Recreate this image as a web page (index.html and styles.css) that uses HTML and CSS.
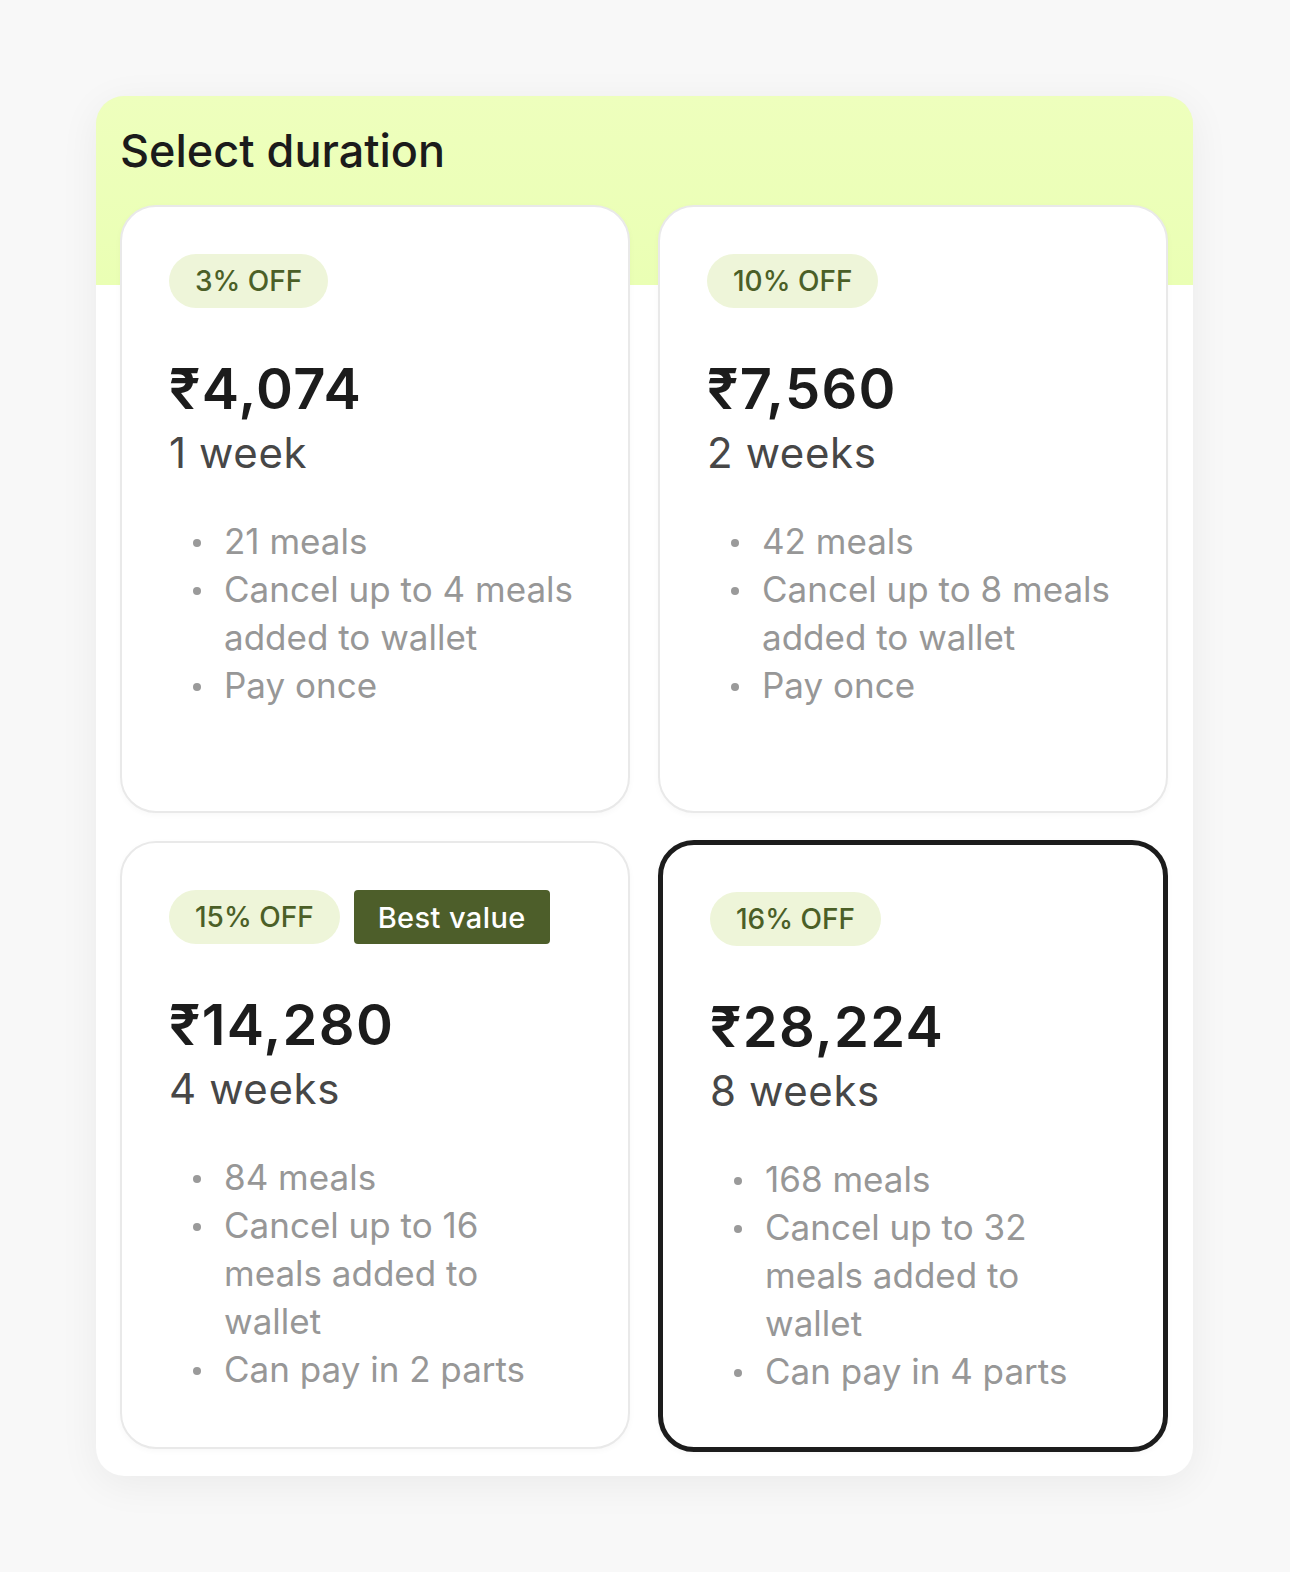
FILE: index.html
```html
<!DOCTYPE html>
<html lang="en">
<head>
    <meta charset="UTF-8">
    <meta name="viewport" content="width=device-width, initial-scale=1.0">
    <title>Select duration</title>
    <link rel="stylesheet" href="styles.css">
</head>
<body>
    <div class="plan-panel">
        <h2 class="panel-title">Select duration</h2>

        <div class="plan-grid">
            <div class="plan-card">
                <div class="tags">
                    <span class="off-tag">3% OFF</span>
                </div>
                <div class="price">₹4,074</div>
                <div class="duration">1 week</div>
                <ul class="perks">
                    <li>21 meals</li>
                    <li>Cancel up to 4 meals added to wallet</li>
                    <li>Pay once</li>
                </ul>
            </div>

            <div class="plan-card">
                <div class="tags">
                    <span class="off-tag">10% OFF</span>
                </div>
                <div class="price">₹7,560</div>
                <div class="duration">2 weeks</div>
                <ul class="perks">
                    <li>42 meals</li>
                    <li>Cancel up to 8 meals added to wallet</li>
                    <li>Pay once</li>
                </ul>
            </div>

            <div class="plan-card">
                <div class="tags">
                    <span class="off-tag">15% OFF</span>
                    <span class="best-tag">Best value</span>
                </div>
                <div class="price">₹14,280</div>
                <div class="duration">4 weeks</div>
                <ul class="perks">
                    <li>84 meals</li>
                    <li>Cancel up to 16 meals added to wallet</li>
                    <li>Can pay in 2 parts</li>
                </ul>
            </div>

            <div class="plan-card selected">
                <div class="tags">
                    <span class="off-tag">16% OFF</span>
                </div>
                <div class="price">₹28,224</div>
                <div class="duration">8 weeks</div>
                <ul class="perks">
                    <li>168 meals</li>
                    <li>Cancel up to 32 meals added to wallet</li>
                    <li>Can pay in 4 parts</li>
                </ul>
            </div>
        </div>
    </div>

    <script>
        // clicking a card moves the selection to it
        const cards = document.querySelectorAll('.plan-card');
        cards.forEach(card => {
            card.addEventListener('click', () => {
                cards.forEach(c => c.classList.remove('selected'));
                card.classList.add('selected');
            });
        });
    </script>
</body>
</html>
```

FILE: styles.css
```css
* {
    margin: 0;
    padding: 0;
    box-sizing: border-box;
    font-family: Inter, 'Noto Sans', Arial, sans-serif;
}

body {
    min-height: 100vh;
    background-color: #f8f8f8;
    padding: 96px 97px 96px 96px;
}

.plan-panel {
    background: linear-gradient(#eeffbd, #eaffb4) top / 100% 189px no-repeat, #ffffff;
    border-radius: 28px;
    padding: 27px 25px 24px 24px;
    box-shadow: 0 8px 40px rgba(0, 0, 0, 0.06);
}

.panel-title {
    font-size: 45px;
    font-weight: 500;
    color: #1b1b1b;
    line-height: 56px;
    margin-bottom: 26px;
}

.plan-grid {
    display: grid;
    grid-template-columns: 1fr 1fr;
    align-items: start;
    gap: 28px;
}

.plan-card {
    min-height: 608px;
    background-color: #ffffff;
    border: 2px solid #e9e9e9;
    border-radius: 36px;
    padding: 47px 48px 52px 47px;
    box-shadow: 0 2px 6px rgba(0, 0, 0, 0.03);
    cursor: pointer;
}

.plan-card.selected {
    border: 5px solid #1c1c1c;
    margin-top: -1px;
}

.tags {
    display: flex;
    gap: 14px;
}

.off-tag {
    display: inline-flex;
    align-items: center;
    height: 54px;
    padding: 0 26px;
    border-radius: 27px;
    background-color: #eef5d9;
    color: #4b5f27;
    font-size: 28px;
    font-weight: 500;
}

.best-tag {
    display: inline-flex;
    align-items: center;
    height: 54px;
    padding: 0 24px;
    border-radius: 4px;
    background-color: #4d5e2a;
    color: #ffffff;
    font-size: 29px;
    font-weight: 500;
    letter-spacing: 0.4px;
}

.price {
    margin-top: 48px;
    font-size: 56px;
    font-weight: 600;
    color: #1c1c1c;
    line-height: 1.2;
    letter-spacing: 1.3px;
}

.duration {
    margin-top: 7px;
    font-size: 42px;
    color: #474747;
    line-height: 1.1;
    letter-spacing: 0.6px;
}

.perks {
    list-style: none;
    margin-top: 41px;
    padding-left: 5px;
}

.perks li {
    position: relative;
    padding-left: 50px;
    font-size: 35px;
    line-height: 48px;
    color: #979797;
}

.perks li::before {
    content: '';
    position: absolute;
    left: 19px;
    top: 22px;
    width: 8px;
    height: 8px;
    border-radius: 50%;
    background-color: #9a9a9a;
}
```
